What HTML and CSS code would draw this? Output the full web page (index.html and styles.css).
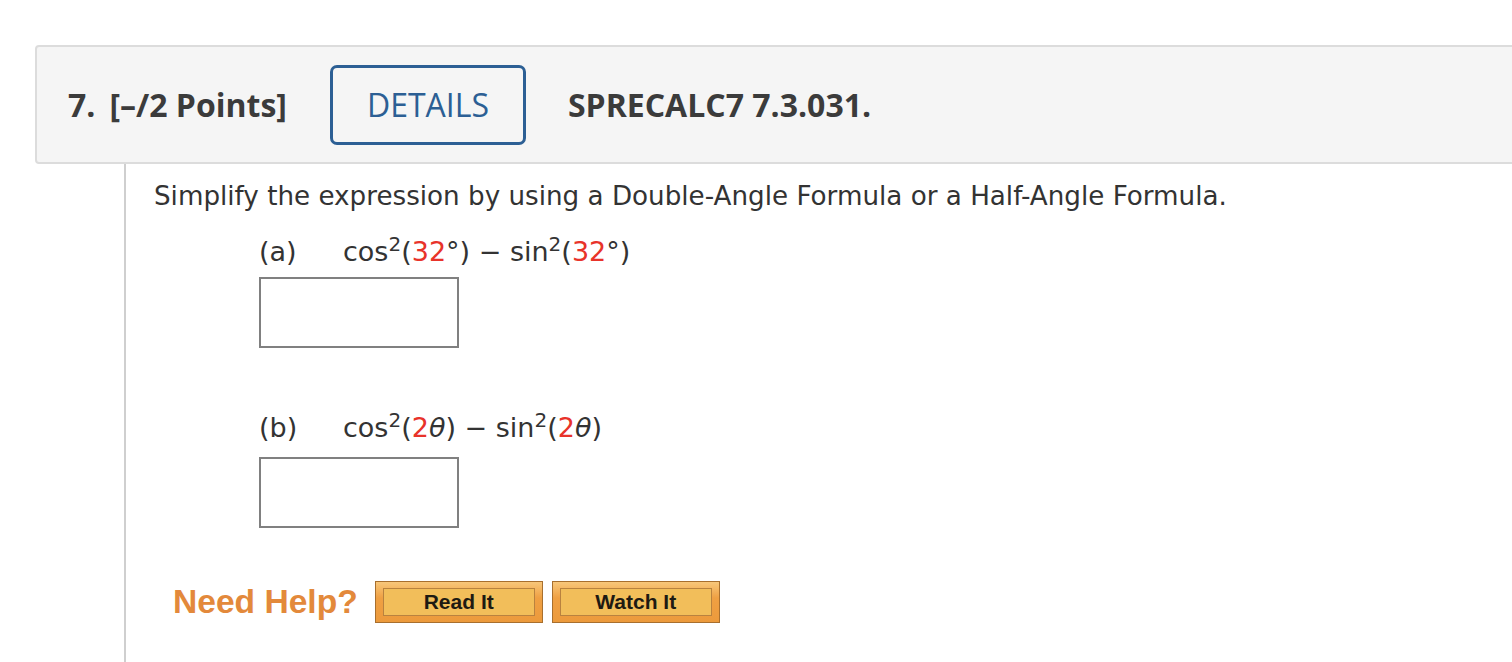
FILE: index.html
```html
<!DOCTYPE html>
<html lang="en">
<head>
    <meta charset="UTF-8">
    <title>Question 7</title>
    <link rel="stylesheet" href="styles.css">
</head>
<body>
    <div class="question">
        <div class="q-header">
            <span class="q-num">7.</span>
            <span class="q-points">[&ndash;/2 Points]</span>
            <button class="details-btn">DETAILS</button>
            <span class="q-ref">SPRECALC7 7.3.031.</span>
        </div>

        <div class="q-body">
            <p class="prompt">Simplify the expression by using a Double-Angle Formula or a Half-Angle Formula.</p>

            <div class="part part-a">
                <div class="part-row">
                    <span class="part-label">(a)</span>
                    <span class="expr">cos<sup>2</sup>(<span class="red">32</span>&deg;) &minus; sin<sup>2</sup>(<span class="red">32</span>&deg;)</span>
                </div>
                <input class="answer" type="text">
            </div>

            <div class="part part-b">
                <div class="part-row">
                    <span class="part-label">(b)</span>
                    <span class="expr">cos<sup>2</sup>(<span class="red">2</span><i>&theta;</i>) &minus; sin<sup>2</sup>(<span class="red">2</span><i>&theta;</i>)</span>
                </div>
                <input class="answer" type="text">
            </div>

            <div class="help">
                <span class="help-label">Need Help?</span>
                <button class="help-btn"><span>Read It</span></button>
                <button class="help-btn"><span>Watch It</span></button>
            </div>
        </div>
    </div>
</body>
</html>
```

FILE: styles.css
```css
html, body {
    margin: 0;
    padding: 0;
    background: #fff;
    overflow: hidden;
}
.question {
    padding: 45px 0 0 35px;
    color: #333;
}
.q-header {
    display: flex;
    align-items: center;
    height: 115px;
    margin-right: -20px;
    padding-left: 31px;
    background-color: #f5f5f5;
    border: 2px solid #dcdcdc;
    border-radius: 4px;
    font-family: "Open Sans", sans-serif;
    font-weight: 700;
    font-size: 32px;
    color: #3b3b3b;
}
.q-points {
    margin-left: 14px;
}
.details-btn {
    margin-left: 43px;
    width: 196px;
    height: 80px;
    background: transparent;
    border: 3px solid #2c5f94;
    border-radius: 7px;
    font-family: "Open Sans", sans-serif;
    font-size: 32px;
    font-weight: 500;
    color: #2c5f94;
    padding: 0;
}
.q-ref {
    margin-left: 42px;
}
.q-body {
    margin-left: 89px;
    border-left: 2px solid #cfcfcf;
    padding: 17px 0 40px 28px;
    font-family: "DejaVu Sans", Verdana, sans-serif;
    font-size: 26.2px;
    line-height: 30px;
    color: #333;
}
.prompt {
    margin: 0 0 26px;
}
.part {
    margin-left: 105px;
    font-size: 27px;
}
.part-row {
    display: flex;
    align-items: baseline;
    height: 30px;
}
.part-label {
    width: 84px;
}
.expr sup {
    font-size: 20px;
    line-height: 0;
    vertical-align: 0.5em;
}
.red {
    color: #e8332a;
}
.answer {
    display: block;
    box-sizing: border-box;
    width: 200px;
    height: 71px;
    margin: 10px 0 65px;
    border: 2px solid #808080;
    background: #fff;
}
.part-b .answer {
    margin: 14px 0 53px;
}
.help {
    display: flex;
    align-items: center;
    margin-left: 19px;
}
.help-label {
    font-family: "Liberation Sans", Arial, sans-serif;
    font-weight: 700;
    font-size: 33.6px;
    color: #e3893b;
    margin-right: 17px;
}
.help-btn {
    width: 168px;
    height: 42px;
    margin-right: 9px;
    padding: 6px 7px;
    border: 1px solid #a86f2e;
    background: linear-gradient(#f8c77a, #efa043 40%, #ec9a3c);
    cursor: pointer;
}
.help-btn span {
    display: block;
    height: 100%;
    box-sizing: border-box;
    border: 1px solid #b9823f;
    background: #f2be5a;
    font-family: "Liberation Sans", Arial, sans-serif;
    font-weight: 700;
    font-size: 21px;
    line-height: 26px;
    color: #1e1a12;
}
```
